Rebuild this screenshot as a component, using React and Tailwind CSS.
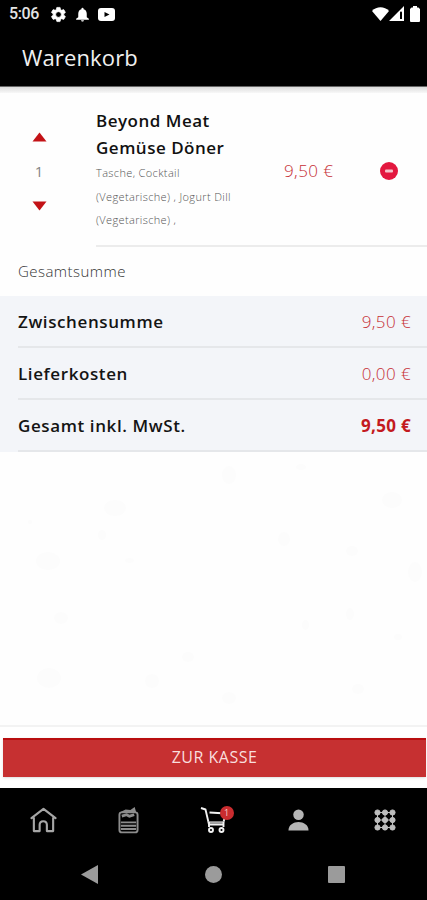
import React from 'react';

const totals = [
  { label: 'Zwischensumme', value: '9,50 €' },
  { label: 'Lieferkosten', value: '0,00 €' },
  { label: 'Gesamt inkl. MwSt.', value: '9,50 €', bold: true },
];

// faint speckles of the paper background: x, y, width, height
const specks = [
  [28, 68, 4, 4], [98, 78, 8, 10], [104, 48, 22, 16], [36, 100, 24, 18], [125, 106, 9, 5],
  [54, 160, 14, 12], [37, 216, 24, 20], [145, 222, 14, 14], [182, 200, 12, 10], [222, 14, 14, 18],
  [296, 12, 10, 6], [278, 80, 12, 14], [346, 94, 12, 10], [408, 110, 14, 20], [302, 168, 7, 10],
  [346, 156, 8, 12], [394, 182, 8, 6], [382, 40, 20, 16], [352, 232, 12, 10], [222, 240, 14, 12],
];

const StatusBar = () => (
  <div className="h-7 flex items-center justify-between pl-[9px] pr-[7px] text-white">
    <div className="flex items-center">
      <span className="w-[41px] font-[Roboto,sans-serif] text-[16px] leading-7 font-medium tracking-[-0.4px] text-[#e4e4e4]">5:06</span>
      <svg width="17" height="17" viewBox="0 0 24 24" fill="currentColor">
        <path fillRule="evenodd" stroke="currentColor" strokeWidth="1" d="M19.400 13a7.700 7.700 0 0 0 0-2l2.100-1.600a.5.5 0 0 0 .1-.6l-2-3.500a.5.5 0 0 0-.6-.2l-2.500 1a7 7 0 0 0-1.700-1l-.4-2.600a.5.5 0 0 0-.5-.5h-4a.5.5 0 0 0-.5.4L9 5.100a7 7 0 0 0-1.700 1l-2.500-1a.5.5 0 0 0-.6.2l-2 3.500a.5.5 0 0 0 .1.600L4.500 11a7.700 7.700 0 0 0 0 2l-2.200 1.600a.5.5 0 0 0-.1.600l2 3.500c.1.200.4.300.6.200l2.500-1a7 7 0 0 0 1.700 1l.4 2.600c0 .3.200.5.500.5h4c.3 0 .5-.2.500-.4l.4-2.700a7 7 0 0 0 1.700-1l2.500 1c.2.100.5 0 .6-.2l2-3.500a.5.5 0 0 0-.1-.6L19.400 13ZM12 16a4 4 0 1 1 0-8 4 4 0 0 1 0 8Z" />
      </svg>
      <svg className="ml-[7px]" width="17" height="17" viewBox="0 0 24 24" fill="currentColor">
        <path d="M12 22c1.100 0 2-.9 2-2h-4c0 1.100.9 2 2 2Zm6-6v-5c0-3.100-1.600-5.600-4.500-6.300V4a1.500 1.500 0 0 0-3 0v.7C7.600 5.400 6 7.900 6 11v5l-3 2v1.500h18V18l-3-2Z" />
      </svg>
      <svg className="ml-[7px]" width="17" height="13" viewBox="0 0 17 13">
        <rect width="17" height="13" rx="3" fill="currentColor" />
        <path d="M6.500 4v5l5-2.500z" fill="#000" />
      </svg>
    </div>
    <div className="flex items-center pb-px">
      <svg width="17" height="14" viewBox="0 0 17 14" fill="currentColor">
        <path d="M8.500 14 0 4C4.500-1 12.500-1 17 4Z" />
      </svg>
      <svg width="15" height="15" viewBox="0 0 15 15" fill="currentColor">
        <path fillRule="evenodd" d="M0 15 15 0v15ZM11 6.500v6.500h2V6.500c0-1.500-2-1.500-2 0Z" />
      </svg>
      <svg className="ml-[6px]" width="10" height="16" viewBox="0 0 10 16" fill="currentColor">
        <path d="M3 0h4v1.500h1.500L10 3V15a1 1 0 0 1-1 1H1a1 1 0 0 1-1-1V3L1.500 1.500H3Z" />
      </svg>
    </div>
  </div>
);

const CartItem = () => (
  <div className="h-[154px] flex">
    <div className="w-24 pl-[32px] pt-[39px] flex flex-col">
      <svg width="15" height="10" viewBox="0 0 15 10"><path d="M7.500.5 14.500 9.500H.5Z" fill="#c31216" /></svg>
      <span className="w-[14px] h-[59px] pb-[1px] flex items-center justify-center text-[15px] text-[#858585]">1</span>
      <svg width="15" height="10" viewBox="0 0 15 10"><path d="M.5.500h14L7.500 9.500Z" fill="#c31216" /></svg>
    </div>
    <div className="flex-1 flex border-b-2 border-[#ececec]">
      <div className="w-[188px] pt-[14px]">
        <h2 className="text-[17px] leading-[27px] font-semibold tracking-[0.5px] text-[#111]">Beyond Meat<br />Gemüse Döner</h2>
        <p className="text-[11px] leading-[23.500px] font-light tracking-[0.36px] whitespace-nowrap text-[#555]">
          Tasche, Cocktail<br />(Vegetarische) , Jogurt Dill<br />(Vegetarische) ,
        </p>
      </div>
      <span className="w-24 pt-[66px] text-[17px] leading-6 font-light tracking-[0.4px] text-[#c62f36]">9,50 €</span>
      <svg className="mt-[69px]" width="18" height="18" viewBox="0 0 18 18">
        <circle cx="9" cy="9" r="9" fill="#e3183f" />
        <rect x="5" y="7.500" width="8" height="3" rx="1" fill="#f5c3cb" />
      </svg>
    </div>
  </div>
);

const TabBar = () => (
  <div className="h-[60px] flex items-center pt-[4px] pl-[1px] text-[#a6a6a6]">
    <div className="flex-1 flex justify-center">
      <svg width="27" height="26" viewBox="0 0 28 26" fill="none" stroke="currentColor" strokeWidth="2.200" strokeLinejoin="round" strokeLinecap="round">
        <path d="M1.500 11 14 1.500 26.500 11M4 11v13.500h6V18c0-5 7.500-5 7.500 0v6.500H24V11" />
      </svg>
    </div>
    <div className="flex-1 flex justify-center text-[#8c8c8c]">
      <svg width="21" height="28" viewBox="0 0 22 28" fill="none" stroke="currentColor" strokeWidth="2">
        <rect x="1.500" y="6" width="19" height="21" rx="2.500" />
        <path d="M3 16.500h16M3 20h16M3 23.500h16" />
        <path d="M2 6 8 3l5 .5L17.500.5 19 6Z" fill="currentColor" stroke="none" />
        <path d="M4 10 9 8.500l3 1.500 5-1.500" strokeWidth="3" />
      </svg>
    </div>
    <div className="flex-1 flex justify-center">
      <div className="relative text-[#f2f2f2]">
        <svg width="28" height="28" viewBox="0 0 28 28" fill="none" stroke="currentColor" strokeWidth="1.900" strokeLinejoin="round">
          <path d="M1 2 5.500 3.500 9 18.500h15M9.500 6.500 26 7.500l-2.500 8.500" />
          <path d="M8.500 16.500h15.500" stroke="#aaa" strokeWidth="2.500" />
          <path d="M9 16v5M23.500 16v5" />
          <circle cx="11" cy="24" r="2" /><circle cx="21.500" cy="24" r="2" />
        </svg>
        <span className="absolute top-0 left-5 w-[14px] h-[14px] rounded-full bg-[#ca2c2f] text-[9px] leading-[14px] text-center text-[#f3caca]">1</span>
      </div>
    </div>
    <div className="flex-1 flex justify-center">
      <svg width="21" height="22" viewBox="0 0 22 22" fill="#b5b5b5">
        <circle cx="11" cy="5.500" r="5.500" /><path d="M.5 22c0-12 21-12 21 0Z" />
      </svg>
    </div>
    <div className="flex-1 flex justify-center pl-px">
      <svg width="22" height="22" viewBox="0 0 22 22" fill="#bdbdbd" stroke="#bdbdbd">
        {[3.5, 11, 18.5].map(y => [3.5, 11, 18.5].map(x => <circle key={`${x}-${y}`} cx={x} cy={y} r="2.600" />))}
        <path d="M3 3.500h16M3 11h16M3 18.500h16M3.500 3v16M11 3v16M18.500 3v16" />
      </svg>
    </div>
  </div>
);

const App = () => {
  return (
    <div className="w-full h-[900px] flex flex-col overflow-hidden bg-[#fefefe] font-['Open_Sans','Noto_Sans',sans-serif]">
      <header className="h-[86px] bg-black">
        <StatusBar />
        <h1 className="pl-[22px] pt-[12px] text-[22px] leading-[34px] tracking-[0.15px] text-[#f0f0f0]">Warenkorb</h1>
      </header>
      <div className="h-[7px] border-t border-[#666] bg-gradient-to-b from-[#dcdcdc] to-[#f8f8f8]" />
      <CartItem />
      <div className="h-[49px] pl-[18px] flex items-center text-[15px] font-light tracking-[0.45px] text-[#333]">Gesamtsumme</div>
      <div className="bg-[#f3f5f9]">
        {totals.map(t => (
          <div key={t.label} className="ml-[18px] pr-4 pt-px h-[52px] flex items-center justify-between border-b-2 border-[#e5e7ea] text-[17px]">
            <span className="font-semibold tracking-[0.6px] text-[#141414]">{t.label}</span>
            <span className={t.bold ? 'font-bold tracking-[0.3px] text-[#c31a20]' : 'font-light tracking-[0.4px] text-[#c62f36]'}>{t.value}</span>
          </div>
        ))}
      </div>
      <div className="flex-1">
        <svg width="427" height="270" fill="#fcfcfc">
          {specks.map(([x, y, w, h]) => <ellipse key={`${x}-${y}`} cx={x + w / 2} cy={y + h / 2} rx={w / 2} ry={h / 2} />)}
        </svg>
      </div>
      <div className="h-[63px] pt-[11px] pl-[3px] pr-[1px] border-t-2 border-[#f3f3f3] bg-white">
        <button className="block w-full h-[39px] pb-[3px] border-t-2 border-[#b90e10] bg-[#c63031] shadow-sm text-[16px] tracking-[0.5px] text-[#f9dede]">ZUR KASSE</button>
      </div>
      <nav className="h-28 bg-black">
        <TabBar />
        <div className="h-[52px] pl-[81px] pr-[82px] flex items-center justify-between">
          <svg width="17" height="19" viewBox="0 0 17 19"><path d="M17 0v19L0 9.500Z" fill="#9b9b9b" /></svg>
          <span className="w-[17px] h-[17px] rounded-full bg-[#9b9b9b]" />
          <span className="w-[17px] h-[17px] rounded-[1px] bg-[#9b9b9b]" />
        </div>
      </nav>
    </div>
  );
};

export default App;
